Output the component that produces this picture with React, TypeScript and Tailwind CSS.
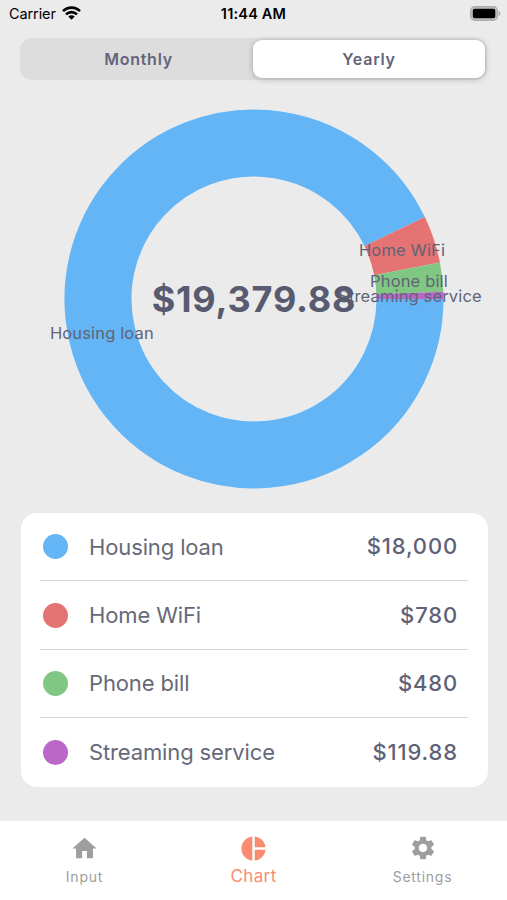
import { MdHome, MdPieChart, MdSettings } from 'react-icons/md';

const expenses = [
  { name: 'Housing loan', value: 18000, amount: '$18,000', color: '#64b5f6' },
  { name: 'Home WiFi', value: 780, amount: '$780', color: '#e57373' },
  { name: 'Phone bill', value: 480, amount: '$480', color: '#81c784' },
  { name: 'Streaming service', value: 119.88, amount: '$119.88', color: '#ba68c8' },
];

const total = expenses.reduce((sum, item) => sum + item.value, 0);

const RADIUS = 156;
const CENTER_X = 254;
const CENTER_Y = 199;

function point(angle: number, radius: number) {
  return {
    x: CENTER_X + radius * Math.cos(angle),
    y: CENTER_Y + radius * Math.sin(angle),
  };
}

function StatusBar() {
  return (
    <div className="flex h-7 shrink-0 items-center justify-between pl-[9px] pr-[6px] text-black">
      <div className="flex w-40 items-center gap-1.5">
        <span className="text-[14.5px] tracking-[-0.1px]">Carrier</span>
        <svg className="-mt-0.5 h-[14px] w-[19px]" viewBox="0 0 19 14" fill="none" stroke="currentColor" strokeWidth={2.6}>
          <path d="M1 5.2C5.8.4 13.2.4 18 5.2" />
          <path d="M4 8.4c3.1-3 7.9-3 11 0" />
          <path d="M6.3 10.5c1.8-1.7 4.6-1.7 6.4 0L9.5 13.8z" fill="currentColor" stroke="none" />
        </svg>
      </div>
      <span className="text-[14.5px] font-semibold tracking-[0.2px]">11:44 AM</span>
      <div className="flex w-[163px] justify-end">
        <svg className="-mt-0.5 h-[15px] w-[32px]" viewBox="0 0 32 15">
          <rect x="1.8" y="0.8" width="26.5" height="13.4" rx="4" fill="#c4c4c4" stroke="#adadad" strokeWidth={1.5} />
          <rect x="3.8" y="2.8" width="22.5" height="9.4" rx="1.8" fill="#000" />
          <path d="M29.6 5v5c1.3-.5 2-1.4 2-2.5s-.7-2-2-2.5z" fill="#adadad" />
        </svg>
      </div>
    </div>
  );
}

function DonutChart() {
  let angle = 0;
  const slices = expenses.map((item) => {
    const start = angle;
    angle += (item.value / total) * Math.PI * 2;
    const from = point(start, RADIUS);
    const to = point(angle, RADIUS);
    const large = angle - start > Math.PI ? 1 : 0;
    return {
      ...item,
      path: `M${from.x} ${from.y}A${RADIUS} ${RADIUS} 0 ${large} 1 ${to.x} ${to.y}`,
      label: point((start + angle) / 2, RADIUS),
    };
  });

  return (
    <svg className="block h-[398px] w-[507px]" viewBox="0 0 507 398">
      {slices.map((slice) => (
        <path key={slice.name} d={slice.path} fill="none" stroke={slice.color} strokeWidth={67} />
      ))}
      {slices.map((slice) => (
        <text
          key={slice.name}
          x={slice.label.x}
          y={slice.label.y + 5.8}
          textAnchor="middle"
          className="fill-[#5f6475] text-[16.5px] tracking-[0.15px]"
        >
          {slice.name}
        </text>
      ))}
      <text x={CENTER_X} y={CENTER_Y + 12.5} textAnchor="middle" className="fill-[#585b70] text-[36px] font-bold tracking-[0.8px]">
        $19,379.88
      </text>
    </svg>
  );
}

export default function App() {
  return (
    <div className="flex h-[900px] w-[507px] flex-col overflow-hidden bg-[#ebebeb] font-['Inter','Noto_Sans',sans-serif]">
      <StatusBar />

      {/* Period switch */}
      <div className="mx-5 mt-2.5 flex h-[42px] shrink-0 rounded-xl bg-[#dddddd] p-[2px] text-[16px] font-semibold tracking-[0.75px] text-[#62657a]">
        <button className="flex-1 pl-0.5">Monthly</button>
        <button className="w-[232px] rounded-[9px] bg-white shadow-[0_1px_6px_rgba(0,0,0,0.25)]">Yearly</button>
      </div>

      <div className="mt-5 shrink-0">
        <DonutChart />
      </div>

      {/* Expense list */}
      <div className="ml-[20.5px] mr-[19.5px] mt-[15px] shrink-0 rounded-2xl bg-white pl-[19.5px] pr-[19.5px]">
        {expenses.map((item) => (
          <div key={item.name} className="flex h-[68.4px] items-center border-b-[1.5px] border-[#d5d5d8] pl-[2.5px] pr-2.5 last:border-b-0">
            <span className="size-[25px] rounded-full" style={{ backgroundColor: item.color }} />
            <span className="ml-[21.5px] flex-1 pt-px text-[22px] tracking-[-0.13px] text-[#666979]">{item.name}</span>
            <span className="text-[22px] font-medium tracking-[0.85px] text-[#5f6277]">{item.amount}</span>
          </div>
        ))}
      </div>

      {/* Bottom navigation */}
      <div className="mt-auto flex h-[79px] shrink-0 bg-white text-[#9e9e9e]">
        <button className="flex flex-1 flex-col items-center pt-[13px]">
          <MdHome size={29} />
          <span className="mt-1 text-[14px] leading-5 tracking-[0.8px]">Input</span>
        </button>
        <button className="flex flex-1 flex-col items-center pt-[13px] text-[#f98c70]">
          <MdPieChart size={29} />
          <span className="mt-[3px] text-[17px] leading-5 tracking-[0.4px]">Chart</span>
        </button>
        <button className="flex flex-1 flex-col items-center pt-[13px]">
          <MdSettings size={28} />
          <span className="mt-[5px] text-[14px] leading-5 tracking-[0.75px]">Settings</span>
        </button>
      </div>
    </div>
  );
}
